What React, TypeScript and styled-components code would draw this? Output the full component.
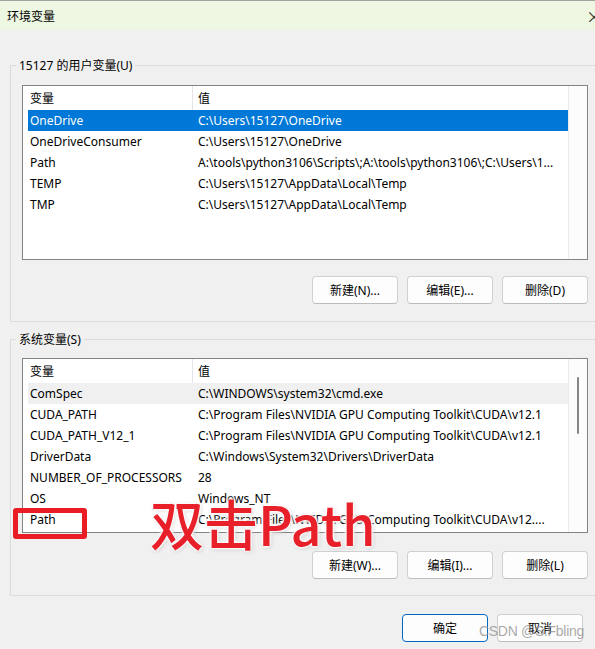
import React from 'react';
import styled, { createGlobalStyle } from 'styled-components';

const GlobalStyle = createGlobalStyle`
  html, body {
    margin: 0;
    padding: 0;
    background: #f0f0f0;
    overflow: hidden;
  }
  body {
    font-family: "Noto Sans", "Noto Sans CJK SC", sans-serif;
    font-size: 12px;
    color: #000;
  }
`;

type EnvVar = { name: string; value: string };

const userVars: EnvVar[] = [
  { name: 'OneDrive', value: 'C:\\Users\\15127\\OneDrive' },
  { name: 'OneDriveConsumer', value: 'C:\\Users\\15127\\OneDrive' },
  { name: 'Path', value: 'A:\\tools\\python3106\\Scripts\\;A:\\tools\\python3106\\;C:\\Users\\1...' },
  { name: 'TEMP', value: 'C:\\Users\\15127\\AppData\\Local\\Temp' },
  { name: 'TMP', value: 'C:\\Users\\15127\\AppData\\Local\\Temp' },
];

const systemVars: EnvVar[] = [
  { name: 'ComSpec', value: 'C:\\WINDOWS\\system32\\cmd.exe' },
  { name: 'CUDA_PATH', value: 'C:\\Program Files\\NVIDIA GPU Computing Toolkit\\CUDA\\v12.1' },
  { name: 'CUDA_PATH_V12_1', value: 'C:\\Program Files\\NVIDIA GPU Computing Toolkit\\CUDA\\v12.1' },
  { name: 'DriverData', value: 'C:\\Windows\\System32\\Drivers\\DriverData' },
  { name: 'NUMBER_OF_PROCESSORS', value: '28' },
  { name: 'OS', value: 'Windows_NT' },
  { name: 'Path', value: 'C:\\Program Files\\NVIDIA GPU Computing Toolkit\\CUDA\\v12....' },
];

export default function App() {
  return (
    <Window>
      <GlobalStyle />
      <TitleBar>
        <span>环境变量</span>
        <Close>×</Close>
      </TitleBar>

      <GroupBox $top={35} $padTop={19} $padBottom={17}>
        <Legend>15127 的用户变量(U)</Legend>
        <VarList vars={userVars} selected={0} active />
        <ButtonRow $gap={16}>
          <Button>新建(N)...</Button>
          <Button>编辑(E)...</Button>
          <Button>删除(D)</Button>
        </ButtonRow>
      </GroupBox>

      <GroupBox $top={17} $padTop={18} $padBottom={16}>
        <Legend>系统变量(S)</Legend>
        <VarList vars={systemVars} selected={0} scroll />
        <ButtonRow $gap={18}>
          <Button>新建(W)...</Button>
          <Button>编辑(I)...</Button>
          <Button>删除(L)</Button>
        </ButtonRow>
      </GroupBox>

      <Footer>
        <Button $primary>确定</Button>
        <Button>取消</Button>
      </Footer>

      <Marker />
      <Callout>双击Path</Callout>
      <Watermark>CSDN @S.Fbling</Watermark>
    </Window>
  );
}

function VarList({
  vars,
  selected,
  active,
  scroll,
}: {
  vars: EnvVar[];
  selected: number;
  active?: boolean;
  scroll?: boolean;
}) {
  return (
    <ListFrame>
      <ListBody>
        <HeaderRow>
          <NameCell>变量</NameCell>
          <ValueCell $header>值</ValueCell>
        </HeaderRow>
        {vars.map((v, i) => (
          <Row key={v.name + i} $state={i === selected ? (active ? 'active' : 'inactive') : 'none'}>
            <NameCell>{v.name}</NameCell>
            <ValueCell>{v.value}</ValueCell>
          </Row>
        ))}
      </ListBody>
      <ScrollTrack>{scroll && <Thumb />}</ScrollTrack>
    </ListFrame>
  );
}

const Window = styled.div`
  position: relative;
  width: 595px;
  height: 649px;
  overflow: hidden;
  background: #f0f0f0;
`;

const TitleBar = styled.div`
  height: 29px;
  border-top: 1px solid #a3a3a3;
  background: #eef7e1;
  display: flex;
  align-items: center;
  justify-content: space-between;
  padding-left: 7px;
  font-family: "Noto Sans CJK SC", sans-serif;
  font-size: 12px;
`;

const Close = styled.span`
  font-size: 16px;
  margin-right: -7px;
  color: #333;
`;

const GroupBox = styled.div<{ $top: number; $padTop: number; $padBottom: number }>`
  position: relative;
  margin-top: ${(p) => p.$top}px;
  margin-left: 10px;
  width: 620px;
  border: 1px solid #dcdcdc;
  padding: ${(p) => p.$padTop}px 0 ${(p) => p.$padBottom}px 11px;
`;

const Legend = styled.span`
  position: absolute;
  top: -9px;
  left: 5px;
  padding: 0 3px;
  background: #f0f0f0;
  line-height: 17px;
  font-family: "Noto Sans", "Noto Sans CJK SC", sans-serif;
`;

const ListFrame = styled.div`
  width: 564px;
  height: 173px;
  border: 1px solid #838383;
  background: #fff;
  display: flex;
`;

const ListBody = styled.div`
  width: 541px;
  padding-left: 5px;
  overflow: hidden;
`;

const HeaderRow = styled.div`
  height: 24px;
  display: flex;
  align-items: center;
`;

const Row = styled.div<{ $state: 'active' | 'inactive' | 'none' }>`
  height: 21px;
  display: flex;
  align-items: center;
  white-space: nowrap;
  background: ${(p) => (p.$state === 'active' ? '#0078d7' : p.$state === 'inactive' ? '#f0f0f0' : 'transparent')};
  color: ${(p) => (p.$state === 'active' ? '#fff' : '#000')};
`;

const NameCell = styled.div`
  width: 162px;
  padding-left: 2px;
  flex-shrink: 0;
  overflow: hidden;
`;

const ValueCell = styled.div<{ $header?: boolean }>`
  flex: 1;
  align-self: stretch;
  display: flex;
  align-items: center;
  padding-left: 5px;
  border-left: 1px solid ${(p) => (p.$header ? '#e5e5e5' : 'transparent')};
  overflow: hidden;
  white-space: nowrap;
`;

const ScrollTrack = styled.div`
  position: relative;
  width: 18px;
  border-left: 1px solid #ececec;
  background: #fcfcfc;
`;

const Thumb = styled.div`
  position: absolute;
  left: 8px;
  top: 18px;
  width: 2px;
  height: 57px;
  border-radius: 1px;
  background: #858585;
`;

const ButtonRow = styled.div<{ $gap: number }>`
  width: 566px;
  margin-top: ${(p) => p.$gap}px;
  display: flex;
  justify-content: flex-end;
  gap: 9px;
`;

const Button = styled.button<{ $primary?: boolean }>`
  width: 86px;
  height: 28px;
  border-radius: 4px;
  background: #fdfdfd;
  border: 1px solid ${(p) => (p.$primary ? '#0067c0' : '#d0d0d0')};
  border-bottom-color: ${(p) => (p.$primary ? '#0067c0' : '#bcbcbc')};
  font-family: "Noto Sans", "Noto Sans CJK SC", sans-serif;
  font-size: 12px;
  color: #000;
  padding: 0;
`;

const Footer = styled.div`
  margin-top: 18px;
  padding-right: 12px;
  display: flex;
  justify-content: flex-end;
  gap: 9px;
`;

const Marker = styled.div`
  position: absolute;
  left: 13px;
  top: 508px;
  width: 74px;
  height: 31px;
  box-sizing: border-box;
  border: 5px solid #ea1c24;
  border-radius: 3px;
`;

const Callout = styled.div`
  position: absolute;
  left: 150px;
  top: 485px;
  font-family: "Noto Sans CJK SC", sans-serif;
  font-size: 54px;
  font-weight: 500;
  line-height: 76px;
  white-space: nowrap;
  color: #e8202a;
  text-shadow: 0 0 3px #fff, 0 0 3px #fff, 0 0 3px #fff, 0 0 4px #fff, 1px 1px 4px rgba(0, 0, 0, 0.25);
`;

const Watermark = styled.div`
  position: absolute;
  left: 479px;
  top: 623px;
  font-family: "Liberation Sans", sans-serif;
  font-size: 14px;
  letter-spacing: -0.3px;
  white-space: nowrap;
  color: rgba(140, 140, 140, 0.75);
`;
